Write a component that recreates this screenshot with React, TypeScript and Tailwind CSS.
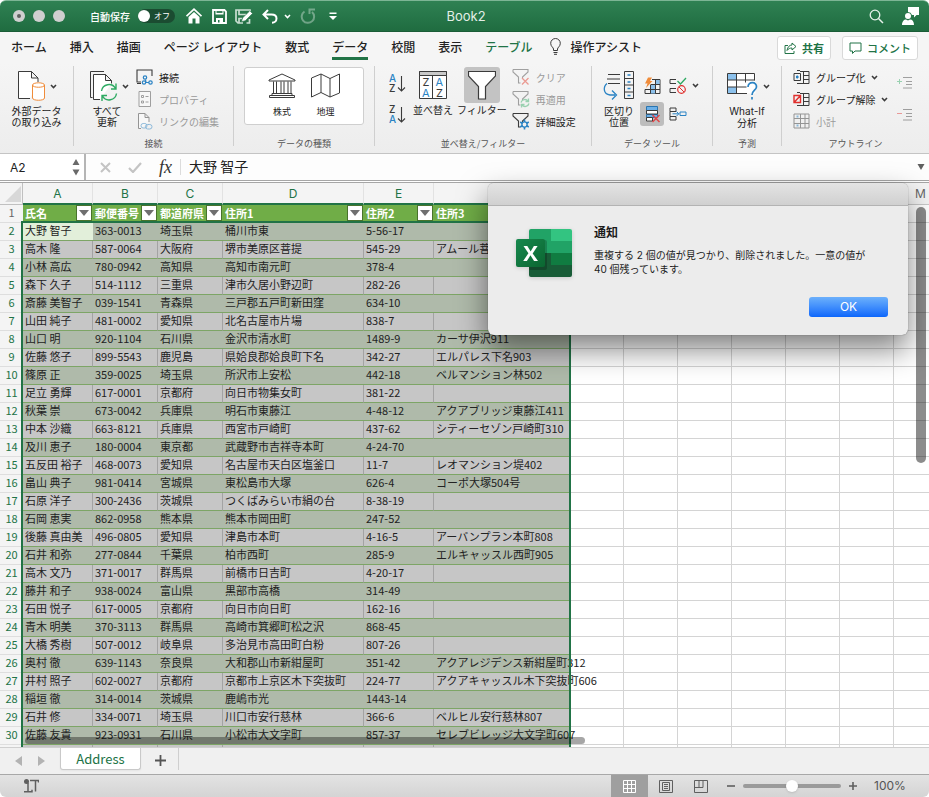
import type { ReactNode } from 'react';
import { clsx } from 'clsx';

const TABS = ['ホーム', '挿入', '描画', 'ページ レイアウト', '数式', 'データ', '校閲', '表示', 'テーブル'];

const HEADERS = ['氏名', '郵便番号', '都道府県', '住所1', '住所2', '住所3'];

const ROWS = [
  ['大野 智子', '363-0013', '埼玉県', '桶川市東', '5-56-17', ''],
  ['高木 隆', '587-0064', '大阪府', '堺市美原区菩提', '545-29', 'アムール菩提'],
  ['小林 高広', '780-0942', '高知県', '高知市南元町', '378-4', ''],
  ['森下 久子', '514-1112', '三重県', '津市久居小野辺町', '282-26', ''],
  ['斎藤 美智子', '039-1541', '青森県', '三戸郡五戸町新田窪', '634-10', ''],
  ['山田 純子', '481-0002', '愛知県', '北名古屋市片場', '838-7', ''],
  ['山口 明', '920-1104', '石川県', '金沢市清水町', '1489-9', 'カーサ伊沢911'],
  ['佐藤 悠子', '899-5543', '鹿児島', '県姶良郡姶良町下名', '342-27', 'エルパレス下名903'],
  ['篠原 正', '359-0025', '埼玉県', '所沢市上安松', '442-18', 'ベルマンション林502'],
  ['足立 勇輝', '617-0001', '京都府', '向日市物集女町', '381-22', ''],
  ['秋葉 崇', '673-0042', '兵庫県', '明石市東藤江', '4-48-12', 'アクアブリッジ東藤江411'],
  ['中本 沙織', '663-8121', '兵庫県', '西宮市戸崎町', '437-62', 'シティーセゾン戸崎町310'],
  ['及川 恵子', '180-0004', '東京都', '武蔵野市吉祥寺本町', '4-24-70', ''],
  ['五反田 裕子', '468-0073', '愛知県', '名古屋市天白区塩釜口', '11-7', 'レオマンション堤402'],
  ['畠山 典子', '981-0414', '宮城県', '東松島市大塚', '626-4', 'コーポ大塚504号'],
  ['石原 洋子', '300-2436', '茨城県', 'つくばみらい市絹の台', '8-38-19', ''],
  ['石岡 恵実', '862-0958', '熊本県', '熊本市岡田町', '247-52', ''],
  ['後藤 真由美', '496-0805', '愛知県', '津島市本町', '4-16-5', 'アーバンプラン本町808'],
  ['石井 和弥', '277-0844', '千葉県', '柏市西町', '285-9', 'エルキャッスル西町905'],
  ['高木 文乃', '371-0017', '群馬県', '前橋市日吉町', '4-20-17', ''],
  ['藤井 和子', '938-0024', '富山県', '黒部市高橋', '314-49', ''],
  ['石田 悦子', '617-0005', '京都府', '向日市向日町', '162-16', ''],
  ['青木 明美', '370-3113', '群馬県', '高崎市箕郷町松之沢', '868-45', ''],
  ['大橋 秀樹', '507-0012', '岐阜県', '多治見市高田町白粉', '807-26', ''],
  ['奥村 徹', '639-1143', '奈良県', '大和郡山市新紺屋町', '351-42', 'アクアレジデンス新紺屋町312'],
  ['井村 照子', '602-0027', '京都府', '京都市上京区木下突抜町', '224-77', 'アクアキャッスル木下突抜町606'],
  ['稲垣 徹', '314-0014', '茨城県', '鹿嶋市光', '1443-14', ''],
  ['石井 修', '334-0071', '埼玉県', '川口市安行慈林', '366-6', 'ベルヒル安行慈林807'],
  ['佐藤 友貴', '923-0931', '石川県', '小松市大文字町', '857-37', 'セレブビレッジ大文字町607'],
  ['', '', '', '', '', ''],
];

const EXTRA_COLUMNS = ['G', 'H', 'I', 'J', 'K', 'L', 'M'];

interface IconProps {
  w: number;
  h: number;
  className?: string;
  children: ReactNode;
}

const Icon = ({ w, h, className, children }: IconProps) => (
  <svg
    width={w}
    height={h}
    viewBox={`0 0 ${w} ${h}`}
    fill="none"
    stroke="#3b3b3b"
    className={clsx('shrink-0', className)}
    aria-hidden="true"
  >
    {children}
  </svg>
);

const Chevron = ({ className }: { className?: string }) => (
  <Icon w={7} h={5} className={className}>
    <path d="M1 1l2.5 2.6L6 1" strokeWidth="1.5" />
  </Icon>
);

const TitleBar = () => (
  <header className="flex h-8 items-center rounded-t-md border-t border-b border-t-[#7db595] border-b-[#1a5c37] bg-linear-to-b from-[#2f8153] to-[#1f6c40] text-white">
    <div className="flex flex-1 items-center pl-[13px]">
      <div className="flex gap-2">
        <button aria-label="閉じる" className="flex size-3 items-center justify-center rounded-full bg-[#cfcfcf]">
          <span className="size-1 rounded-full bg-[#5f5f5f]" />
        </button>
        <button aria-label="しまう" className="size-3 rounded-full bg-[#cfcfcf]" />
        <button aria-label="拡大" className="size-3 rounded-full bg-[#cfcfcf]" />
      </div>
      <span className="ml-[25px] text-[10px] font-medium">自動保存</span>
      <button
        role="switch"
        aria-checked="false"
        aria-label="自動保存"
        className="ml-2 flex h-[14px] w-[37px] items-center rounded-full bg-[#1b4c31]"
      >
        <span className="size-3 rounded-full bg-white" />
        <span className="ml-1 text-[8px] leading-none">オフ</span>
      </button>
      <div className="flex items-center pl-[11px]">
        <button aria-label="ホーム">
          <Icon w={16} h={16} className="stroke-none">
            <path d="M0.5 8.2L8 1.2l7.500 7" stroke="#fff" strokeWidth="1.7" />
            <path d="M2.500 9L8 4l5.500 5v6.500H9.500V10.500h-3v5h-4z" fill="#fff" />
          </Icon>
        </button>
        <button aria-label="保存" className="ml-[10px]">
          <Icon w={15} h={15}>
            <path d="M1 1h11.500L14 2.500V14H1z" stroke="#fff" strokeWidth="1.800" />
            <path d="M3.500 1.500h8v4h-8zM4 9h7v5H4z" fill="#fff" stroke="none" />
            <path d="M4.500 3h6" stroke="#26734a" strokeWidth="1.800" />
            <path d="M6 11h1.500v2.500H6z" fill="#26734a" stroke="none" />
          </Icon>
        </button>
        <button aria-label="名前を付けて保存" className="ml-2">
          <Icon w={18} h={15}>
            <path d="M8 14H3L1 12V1h14v2" stroke="#c9dfd2" strokeWidth="1.700" />
            <path d="M14.500 10v4h-3M4 1v4.500h7M4 14v-4.500h3" stroke="#c9dfd2" strokeWidth="1.700" />
            <path d="M7.500 9L14.800 1.800l2.700 2.700-7.200 7.200-3.800 1z" fill="#fff" stroke="#26734a" strokeWidth="0.600" />
          </Icon>
        </button>
        <button aria-label="元に戻す" className="ml-[9px]">
          <Icon w={16} h={15}>
            <path d="M6 1L1.500 5.500 6 10M2 5.500h7.500c3 0 5 1.600 5 4.100 0 2.400-2 4.200-4.500 4.200" stroke="#fff" strokeWidth="2" />
          </Icon>
        </button>
        <Chevron className="ml-[6px] stroke-white" />
        <button aria-label="やり直し" className="ml-[9px] opacity-35">
          <Icon w={16} h={16}>
            <path d="M4.500 3.500A6.200 6.200 0 1 0 12 4M9.500 6V1.500H15" stroke="#fff" strokeWidth="2" />
          </Icon>
        </button>
        <button aria-label="ツールバーのカスタマイズ" className="ml-[13px]">
          <Icon w={8} h={9} className="stroke-none">
            <path d="M0.500 0.500h7v1.500h-7zM0 4h8L4 8z" fill="#fff" />
          </Icon>
        </button>
      </div>
    </div>
    <h1 className="pt-[2px] font-[Inter] text-[13px] text-[#e3efe8]">Book2</h1>
    <div className="flex flex-1 items-center justify-end gap-[17px] pr-[10px]">
      <button aria-label="検索">
        <Icon w={15} h={15}>
          <circle cx="6" cy="6" r="4.800" stroke="#e6f1ea" strokeWidth="1.300" />
          <path d="M9.500 9.500L14 14" stroke="#e6f1ea" strokeWidth="1.500" />
        </Icon>
      </button>
      <button aria-label="アカウント">
        <Icon w={18} h={18} className="stroke-none">
          <path d="M7 0h11v8h-2.500L13 10.500V8H11A4.500 4.500 0 0 0 7 5z" fill="#fff" />
          <circle cx="7" cy="9" r="3" fill="#fff" />
          <path d="M1 18c0-3.500 2-5.500 4-5.500l2 1 2-1c2.500 0 4 2 4 5.500z" fill="#fff" />
        </Icon>
      </button>
    </div>
  </header>
);

const TabBar = () => (
  <nav className="flex h-[31px] items-start bg-[#f5f5f5] pr-[11px] pl-[11px] text-[12px] font-medium whitespace-nowrap text-[#222]">
    <div className="flex flex-1 gap-[23px]">
      {TABS.map((tab) => (
        <button
          key={tab}
          className={clsx(
            'h-7 border-b-[3px] pt-1 font-medium',
            tab === 'データ' ? 'border-[#217346] font-bold' : 'border-transparent',
            tab === 'テーブル' && 'text-[#217346]',
          )}
        >
          {tab}
        </button>
      ))}
      <button className="-ml-[5px] flex h-7 items-center gap-2 border-b-[3px] border-transparent pt-1 font-medium">
        <Icon w={12} h={17}>
          <path d="M3.500 12.500V11C3.500 9.500 0.700 8.500 0.700 5.300a4.800 4.800 0 0 1 9.600 0C10.300 8.500 7.500 9.500 7.500 11v1.500zM3.500 14.500h4M4 16.300h3" />
        </Icon>
        操作アシスト
      </button>
    </div>
    <div className="flex gap-[11px] pt-1 text-[11px] text-[#217346]">
      <button className="flex h-6 items-center gap-[5px] rounded-[3px] border border-[#d9d9d9] bg-white px-[6px] font-bold">
        <Icon w={13} h={12}>
          <path d="M4 3.500H1v8h9V9" stroke="#217346" />
          <path d="M8 1l4 3.500L8 8V6C6 6 4.500 6.500 3 8.500 3.500 5 5.500 3 8 3z" stroke="#217346" />
        </Icon>
        共有
      </button>
      <button className="flex h-6 items-center gap-[5px] rounded-[3px] border border-[#d9d9d9] bg-white px-[6px] font-medium">
        <Icon w={13} h={12}>
          <path d="M1 1h11v8H6l-2.500 2.500V9H1z" stroke="#217346" />
        </Icon>
        コメント
      </button>
    </div>
  </nav>
);

interface GroupProps {
  label: string;
  className: string;
  children: ReactNode;
}

const Group = ({ label, className, children }: GroupProps) => (
  <section className={clsx('flex h-20 shrink-0 flex-col justify-between border-[#cfcfcf]', className)}>
    <div className="flex items-start">{children}</div>
    <h2 className="-mb-1 text-center text-[9px] leading-3 text-[#555]">{label}</h2>
  </section>
);

interface SmallButtonProps {
  label: string;
  icon: ReactNode;
  disabled?: boolean;
  menu?: boolean;
}

const SmallButton = ({ label, icon, disabled, menu }: SmallButtonProps) => (
  <button
    disabled={disabled}
    className={clsx('flex h-[22px] items-center gap-[6px] whitespace-nowrap', disabled ? 'text-[#9a9a9a]' : 'text-[#222]')}
  >
    {icon}
    <span>{label}</span>
    {menu && <Chevron />}
  </button>
);

const Funnel = ({ children, faded }: { children: ReactNode; faded?: boolean }) => (
  <Icon w={18} h={18} className={clsx(faded && 'opacity-45')}>
    <path d="M1 1.500h15v2.500L10.500 9v1M1 1.500V4l5.500 5v6h2" strokeWidth="1.100" />
    {children}
  </Icon>
);

const Ribbon = () => (
  <div className="flex h-[91px] overflow-hidden border-b border-[#c4c4c4] bg-linear-to-b from-[#f5f5f5] to-[#ededed] pt-[3px] text-[10px] leading-[11px] text-[#222]">
    <Group label="" className="w-[74px] border-r">
      <button className="flex w-full flex-col items-center pt-1">
        <span className="flex items-center gap-[5px]">
          <Icon w={28} h={32}>
            <path d="M13 28.500H1.500v-27h13l6.500 6.500v4M14.500 1.500v6.500H21" fill="#fff" />
            <ellipse cx="21.500" cy="15" rx="6" ry="2.200" stroke="#f08c3a" fill="#fff" />
            <path d="M15.500 15v13c0 3 12 3 12 0V15" fill="#fff" stroke="#f08c3a" />
            <path d="M15.500 15c0 3 12 3 12 0" stroke="#f08c3a" />
          </Icon>
          <Chevron />
        </span>
        <span className="pt-[3px]">
          外部データ
          <br />
          の取り込み
        </span>
      </button>
    </Group>

    <Group label="接続" className="w-[160px] border-r">
      <button className="flex w-[62px] flex-col items-center pt-1">
        <span className="flex items-center gap-1 pl-2">
          <Icon w={29} h={32}>
            <path d="M15 1.500H1.500v26h2" />
            <path d="M11 29.500H4.500v-25h12l6 6v3M16.500 4.500v6h6" fill="#fff" />
            <path d="M12.500 21a7.500 7.500 0 0 1 14-2.500M27.500 23.500a7.500 7.500 0 0 1-14 2.500M27 13.500v5.500h-5M13 31v-5.500h5" stroke="#2eaa62" strokeWidth="1.400" />
          </Icon>
          <Chevron />
        </span>
        <span className="pt-[3px] pl-1">
          すべて
          <br />
          更新
        </span>
      </button>
      <div className="flex flex-col">
        <SmallButton
          label="接続"
          icon={
            <Icon w={17} h={16}>
              <path d="M5 13H1V1h15v6M1 14.500h4" strokeWidth="1.100" />
              <g stroke="#2a83c4" strokeWidth="1.200">
                <circle cx="9" cy="8.500" r="1.700" />
                <circle cx="8" cy="13.500" r="1.700" />
                <circle cx="14.500" cy="13.500" r="1.700" />
                <path d="M9.500 10.500l.5 3h3" />
              </g>
            </Icon>
          }
        />
        <SmallButton
          disabled
          label="プロパティ"
          icon={
            <Icon w={17} h={16} className="opacity-45">
              <path d="M3 .5h11.500v15H3z" fill="#fff" />
              <path d="M5.500 4.500h2v2h-2zM5.500 10h2v2h-2zM9.500 5.500h3M9.500 11h3" />
            </Icon>
          }
        />
        <SmallButton
          disabled
          label="リンクの編集"
          icon={
            <Icon w={17} h={17} className="opacity-50">
              <path d="M5 15.500H2.500v-15H9l4 4V9M9 .5v4h4" fill="#fff" />
              <rect x="5" y="10.500" width="6" height="4.500" rx="2.200" stroke="#2a83c4" />
              <rect x="9.500" y="11.500" width="6.500" height="4.500" rx="2.200" stroke="#2a83c4" />
            </Icon>
          }
        />
      </div>
    </Group>

    <Group label="データの種類" className="w-[141px] border-r">
      <div className="mx-[10px] mt-px flex h-[58px] flex-1 justify-center gap-[15px] rounded-[3px] border border-[#cfcfcf] bg-white pt-[5px] text-[9px]">
        <button className="flex flex-col items-center gap-2">
          <Icon w={28} h={25}>
            <path d="M1 8V7l13-6 13 6v1zM1.500 24.500v-2h25v2zM4 22v-1.500h20V22M5.500 8.500v12M8.500 8.500v12M13 8.500v12M16 8.500v12M20 8.500v12M23 8.500v12" />
          </Icon>
          株式
        </button>
        <button className="flex flex-col items-center gap-2">
          <Icon w={29} h={25}>
            <path d="M.5 5L10 1l9 4.500L28.500 1v19L19 24l-9-4.500L.5 24zM10 1v18.500M19 5.500V24" />
          </Icon>
          地理
        </button>
      </div>
    </Group>

    <Group label="並べ替え/フィルター" className="w-[217px] border-r">
      <div className="flex flex-col gap-[9px] pt-[7px] pl-[13px]">
        <button aria-label="昇順">
          <SortIcon first="A" second="Z" />
        </button>
        <button aria-label="降順">
          <SortIcon first="Z" second="A" />
        </button>
      </div>
      <button className="ml-[7px] flex flex-col items-center pt-[5px] whitespace-nowrap">
        <Icon w={28} h={28}>
          <path d="M.5 .5h27v27H.5z" fill="#fff" />
          <path d="M.5 .5h27v4H.5z" fill="#c9c9c9" />
          <path d="M13.500 4.500v23" />
          <g stroke="none" fontSize="11" className="font-[Inter]">
            <text x="3.500" y="15" fill="#3b3b3b">Z</text>
            <text x="3" y="25.500" fill="#2a83c4">A</text>
            <text x="16.500" y="15" fill="#2a83c4">A</text>
            <text x="17" y="25.500" fill="#3b3b3b">Z</text>
          </g>
        </Icon>
        <span className="pt-[5px]">並べ替え</span>
      </button>
      <button className="ml-1 flex flex-col items-center pt-px whitespace-nowrap">
        <span className="flex size-9 items-center justify-center rounded-[3px] bg-[#c3c3c3]">
          <Icon w={28} h={29}>
            <path d="M.5 .5h27V5L17.500 15.500V28h-7V15.500L.5 5z" fill="#fff" strokeWidth="1.200" />
          </Icon>
        </span>
        <span className="pt-[1px]">フィルター</span>
      </button>
      <div className="ml-[5px] flex flex-col">
        <SmallButton
          disabled
          label="クリア"
          icon={
            <Funnel faded>
              <path d="M10 10l6.500 6.500M16.500 10L10 16.500" stroke="#e0301e" strokeWidth="1.300" />
            </Funnel>
          }
        />
        <SmallButton
          disabled
          label="再適用"
          icon={
            <Funnel faded>
              <path d="M9 12.500a4 4 0 0 1 7-1.500M17 13.500a4 4 0 0 1-7 1.500M16.500 8.500V11.500h-3M9.500 17.500v-3h3" stroke="#2eaa62" strokeWidth="1.300" />
            </Funnel>
          }
        />
        <SmallButton
          label="詳細設定"
          icon={
            <Funnel>
              <circle cx="12.500" cy="12.500" r="2.600" stroke="#2a83c4" strokeWidth="1.400" />
              <path d="M12.500 7.500v2.500M12.500 15v2.500M8.200 10l2 1.200M14.800 13.800l2 1.200M8.200 15l2-1.200M14.800 11.200l2-1.200" stroke="#2a83c4" strokeWidth="1.600" />
            </Funnel>
          }
        />
      </div>
    </Group>

    <Group label="データ ツール" className="w-[121px] border-r">
      <button className="ml-[10px] flex w-[34px] flex-col items-center pt-1">
        <Icon w={32} h={32}>
          <path d="M5 4.500h12M4 9h13M5 13.500h12M21.500 1.500h9v27h-9zM21.500 8.500h9M21.500 15h9M21.500 22h9" />
          <path d="M24.500 5h3M24.500 12h3M24.500 18.500h3M24.500 25.500h3" stroke="#2a83c4" strokeWidth="1.300" />
          <path d="M4 13.500c-4 3.500-4 10.500 3 11.500h5M9 20.500l4.500 4.500L9 29.500" stroke="#2a83c4" strokeWidth="1.300" />
        </Icon>
        <span className="pt-[3px]">
          区切り
          <br />
          位置
        </span>
      </button>
      <div className="ml-1 grid grid-cols-[24px_18px_10px] items-center gap-x-[5px] gap-y-[5px] pt-[7px]">
        <button aria-label="フラッシュ フィル" className="flex h-6 items-center justify-center">
          <Icon w={17} h={17}>
            <path d="M8 2.500h8v14H1v-4" />
            <path d="M6.500 8h5v8.500h-5z" fill="#8cc1ec" stroke="none" />
            <path d="M11.500 3h4v4.500h-4z" fill="#8cc1ec" stroke="none" />
            <path d="M6.500 8v8.500M11.500 2.500v14M6.500 7.500H16M1 12.500h15" />
            <path d="M4 .5h4L6 4h2.500L2 11l1.500-4.500H1z" fill="#f08c3a" stroke="none" />
          </Icon>
        </button>
        <button aria-label="データの入力規則">
          <Icon w={18} h={17}>
            <path d="M7 2.500H1v4h6M7 11.500H1v4h6" />
            <path d="M8.500 4l3 3L17 1" stroke="#2eaa62" strokeWidth="1.300" />
            <circle cx="12.500" cy="12.500" r="3.800" stroke="#e0302e" strokeWidth="1.200" />
            <path d="M10 10l5 5" stroke="#e0302e" />
          </Icon>
        </button>
        <Chevron />
        <button aria-label="重複の削除" className="flex size-6 items-center justify-center rounded-[3px] bg-[#bdbdbd]">
          <Icon w={17} h={18}>
            <path d="M2.500 1.500h11v4h-11zM2.500 9.500h11v3h-11z" fill="#6cb0e8" stroke="#2a75b0" />
            <path d="M2.500 5.500h11v3.500h-11zM2.500 12.500h6v3.500h-6z" fill="#fff" />
            <path d="M8.500 10l7 7M15.500 10l-7 7" stroke="#e0484a" strokeWidth="1.500" />
          </Icon>
        </button>
        <button aria-label="統合">
          <Icon w={18} h={14}>
            <path d="M7 4.500V1H1v3.500h6M7 9.500V13H1V9.500h6M1 4.500v5" />
            <path d="M3.500 6.800h6M7.500 4.500l2.300 2.300-2.300 2.300M11 5h6v3.500h-6z" stroke="#2a83c4" />
          </Icon>
        </button>
      </div>
    </Group>

    <Group label="予測" className="w-[69px] border-r">
      <button className="flex w-full flex-col items-center pt-1">
        <span className="flex items-center gap-[5px]">
          <Icon w={33} h={32}>
            <path d="M2.500 3.500h28v20h-28z" fill="#fff" stroke="none" />
            <path d="M2.500 3.500h9v6.500h-9zM2.500 17h9v6.500h-9z" fill="#8cc1ec" stroke="none" />
            <path d="M22 23.500H2.500v-20h27v7M2.500 10h27M2.500 17h19M11.500 3.500v20M20.500 3.500v9" />
            <path d="M23 17c0-6 9-5.500 8.500 0-.3 3.200-4.500 3.500-4.500 8M27 27v2.500" stroke="#2a83c4" strokeWidth="1.700" />
          </Icon>
          <Chevron />
        </span>
        <span className="pt-[3px] text-center">
          <span className="font-[Inter]">What-If</span>
          <br />
          分析
        </span>
      </button>
    </Group>

    <Group label="アウトライン" className="flex-1">
      <div className="ml-[11px] flex flex-1 flex-col">
        <SmallButton
          menu
          label="グループ化"
          icon={
            <Icon w={17} h={14}>
              <path d="M7 1.500h9v12H7M10.500 1.500v12M10.500 5.500H16M10.500 9.500H16" />
              <path d="M1 3.500h6.500v7H1zM4 .5h3M4 13.500h3" />
              <path d="M3.500 6h1.500v2H3.500z" fill="#2a83c4" stroke="#2a83c4" />
            </Icon>
          }
        />
        <SmallButton
          menu
          label="グループ解除"
          icon={
            <Icon w={17} h={14}>
              <path d="M7 1.500h9v12H7M10.500 1.500v12M10.500 5.500H16M10.500 9.500H16M4 .5h3M4 13.500h3" />
              <path d="M1 3.500h6.500v7H1zM1 10.500l6.500-7" stroke="#e0302e" strokeWidth="1.400" />
            </Icon>
          }
        />
        <SmallButton
          disabled
          label="小計"
          icon={
            <Icon w={17} h={16} className="opacity-50">
              <path d="M1 1h15v14H1zM7.500 1v14M12 1v14M1 5.500h15M1 10.500h15" />
              <path d="M3.500 3.500h2M3.500 12.500h2" stroke="#2a83c4" strokeWidth="2" />
            </Icon>
          }
        />
      </div>
      <div className="flex flex-col gap-[18px] pt-[10px] pr-[17px]">
        <button disabled aria-label="詳細データの表示">
          <Icon w={15} h={14} className="opacity-45">
            <path d="M6 1.500h9M9 5.500h6M9 8.500h6M6 12h9" />
            <path d="M0 5.500h5M2.500 3v5" stroke="#2eaa62" />
          </Icon>
        </button>
        <button disabled aria-label="詳細を表示しない">
          <Icon w={15} h={14} className="opacity-45">
            <path d="M6 1.500h9M9 5.500h6M9 8.500h6M6 12h9" />
            <path d="M0 5.500h5" stroke="#e0302e" />
          </Icon>
        </button>
      </div>
    </Group>
  </div>
);

function SortIcon({ first, second }: { first: string; second: string }) {
  return (
    <Icon w={18} h={22}>
      <g stroke="none" fontSize="10" className="font-[Inter]">
        <text x="1" y="9" fill={first === 'A' ? '#2a83c4' : '#3b3b3b'} fontWeight="500">{first}</text>
        <text x="1" y="19" fill={second === 'A' ? '#2a83c4' : '#3b3b3b'} fontWeight="500">{second}</text>
      </g>
      <path d="M13.500 3v15M10 14.500l3.500 3.500 3.500-3.500" strokeWidth="1.100" />
    </Icon>
  );
}

const FormulaBar = () => (
  <div className="flex h-[27px] items-center border-b border-[#a6a6a6] bg-[#fdfdfd]">
    <div className="flex h-full w-[86px] items-center border-r-2 border-[#b5b5b5] bg-white pr-1 pl-[10px]">
      <input aria-label="名前ボックス" defaultValue="A2" className="w-0 flex-1 pt-px font-[Inter] text-[12px] text-[#222] outline-none" />
      <Icon w={8} h={18} className="stroke-none">
        <path d="M4 1l3.500 6h-7zM4 17.500L.5 11.500h7z" fill="#6a6a6a" />
      </Icon>
    </div>
    <div className="flex items-center pl-[14px]">
      <button aria-label="キャンセル">
        <Icon w={11} h={11}>
          <path d="M1 1l9 9M10 1l-9 9" stroke="#c4c4c4" strokeWidth="2" />
        </Icon>
      </button>
      <button aria-label="入力" className="ml-[17px]">
        <Icon w={14} h={11}>
          <path d="M1 6l4 4 8-9" stroke="#c4c4c4" strokeWidth="2.200" />
        </Icon>
      </button>
      <button aria-label="関数の挿入" className="ml-[17px] font-['Liberation_Serif'] text-[18px] leading-none text-[#333] italic">
        fx
      </button>
    </div>
    <input
      aria-label="数式バー"
      defaultValue="大野 智子"
      className="ml-2 h-4 flex-1 border-l border-[#dcdcdc] pb-[2px] pl-2 text-[14px] leading-[14px] text-[#222] outline-none"
    />
    <button aria-label="数式バーの展開" className="pr-1">
      <Icon w={8} h={6} className="stroke-none">
        <path d="M.5 0h7L4 6z" fill="#5f5f5f" />
      </Icon>
    </button>
  </div>
);

const Sheet = () => (
  <main className="relative min-h-0 flex-1 overflow-hidden border-t border-[#a6a6a6] bg-white">
    <table className="w-[948px] table-fixed border-separate border-spacing-0 text-[11px] leading-[14px] whitespace-nowrap text-[#222]">
      <colgroup>
        <col className="w-[23px]" />
        <col className="w-[70px]" />
        <col className="w-[65px]" />
        <col className="w-[65px]" />
        <col className="w-[141px]" />
        <col className="w-[70px]" />
        <col className="w-[136px]" />
        {EXTRA_COLUMNS.map((name) => (
          <col key={name} className="w-[54px]" />
        ))}
      </colgroup>
      <thead>
        <tr className="h-[22px] bg-[#f4f4f4] font-[Inter] text-[12px]">
          <th className="border-r border-b border-[#c0c0c0] p-0">
            <Icon w={16} h={16} className="ml-[5px] stroke-none">
              <path d="M16 0v16H0z" fill="#d8d8d8" />
            </Icon>
          </th>
          {['A', 'B', 'C', 'D', 'E', 'F'].map((name) => (
            <th key={name} className="border-r border-b-2 border-r-[#e2e2e2] border-b-[#217346] p-0 pt-px font-normal text-[#217346]">
              {name}
            </th>
          ))}
          {EXTRA_COLUMNS.map((name) => (
            <th key={name} className="border-r border-b border-[#c9c9c9] p-0 font-normal text-[#666]">
              {name}
            </th>
          ))}
        </tr>
        <tr className="h-[18px]">
          <th className="border-b border-[#dedede] bg-[#f4f4f4] p-0 align-top leading-[15px] font-normal text-[#666]">1</th>
          {HEADERS.map((name) => (
            <th key={name} className="border-b-2 border-[#217346] bg-[#70ad47] p-0 text-white">
              <div className="flex h-4 items-center justify-between pr-px pl-[2px]">
                {name}
                <button
                  aria-label={`${name}のフィルター`}
                  className="flex size-4 shrink-0 items-center justify-center border border-[#48732c] bg-white"
                >
                  <Icon w={10} h={6} className="stroke-none">
                    <path d="M0 0h10L5 6z" fill="#6f6f6f" />
                  </Icon>
                </button>
              </div>
            </th>
          ))}
          {EXTRA_COLUMNS.map((name) => (
            <td key={name} className="border-r border-b border-[#d4d4d4] p-0" />
          ))}
        </tr>
      </thead>
      <tbody>
        {ROWS.map((row, r) => (
          <tr key={r} className="h-[18px]">
            <th className="border-b border-[#dedede] bg-[#f4f4f4] p-0 align-top leading-[15px] font-normal text-[#217346]">
              {row[0] && r + 2}
            </th>
            {row.map((value, c) => (
              <td
                key={c}
                className={clsx(
                  'border-b border-b-[#7da566] py-0 pr-0 pl-[2px] align-top',
                  r % 2 === 0 ? 'bg-[#afbaaa]' : 'border-r border-r-[#a3a3a3] bg-[#c6c6c6]',
                  r === 0 && c === 0 && 'bg-[#e2efda]!',
                )}
              >
                <div className="h-4 w-0 leading-[15px]">{value}</div>
              </td>
            ))}
            {EXTRA_COLUMNS.map((name) => (
              <td key={name} className="border-r border-b border-[#d4d4d4] p-0" />
            ))}
          </tr>
        ))}
      </tbody>
    </table>
    {/* selection outline, runs past the bottom of the visible rows */}
    <div className="pointer-events-none absolute top-[38px] -bottom-2 left-[21px] w-[550px] border-2 border-[#217346]" />
    <div className="absolute top-6 right-[3px] h-64 w-[10px] rounded-full bg-black/45" />
    <div className="absolute bottom-[3px] left-[25px] h-[7px] w-[560px] rounded-full bg-black/35" />
  </main>
);

const SheetTabs = () => (
  <div className="flex h-[27px] items-start border-t border-[#cfcfcf] bg-[#f0f0f0]">
    <div className="flex gap-4 pt-2 pl-[15px]">
      <button aria-label="前のシート">
        <Icon w={7} h={10} className="stroke-none">
          <path d="M7 0v10L0 5z" fill="#b3b3b3" />
        </Icon>
      </button>
      <button aria-label="次のシート">
        <Icon w={7} h={10} className="stroke-none">
          <path d="M0 0v10l7-5z" fill="#b3b3b3" />
        </Icon>
      </button>
    </div>
    <button className="ml-[15px] h-[22px] w-[81px] rounded-b-[3px] border border-t-0 border-[#c9c9c9] bg-white text-[13px] leading-5 text-[#217346] shadow-xs">
      Address
    </button>
    <button aria-label="シートの追加" className="ml-[14px] pt-[7px]">
      <Icon w={11} h={11}>
        <path d="M5.500 0v11M0 5.500h11" stroke="#555" strokeWidth="1.800" />
      </Icon>
    </button>
    <div className="ml-[12px] h-[22px] w-px bg-[#cfcfcf]" />
  </div>
);

const StatusBar = () => (
  <footer className="flex h-[23px] items-center rounded-b-md border-t border-[#a8a8a8] bg-linear-to-b from-[#e3e3e3] to-[#d4d4d4]">
    <button aria-label="マクロの記録" className="ml-6 flex-1">
      <Icon w={15} h={14} className="stroke-none">
        <circle cx="2.500" cy="2.500" r="2.500" fill="#5f5f5f" />
        <path d="M6 1.500h8.500v2M11.500 1.500v11M0 12.800h8v-2M4 4v9" stroke="#5f5f5f" strokeWidth="1.500" />
      </Icon>
    </button>
    <button aria-label="標準" className="flex h-full w-[37px] items-center justify-center bg-[#9f9f9f]">
      <Icon w={13} h={13}>
        <path d="M.5 .5h12v12H.5zM4.500 .5v12M8.500 .5v12M.5 4.500h12M.5 8.500h12" stroke="#fff" />
      </Icon>
    </button>
    <button aria-label="ページ レイアウト" className="ml-[11px]">
      <Icon w={14} h={13}>
        <path d="M.5 .5h13v12H.5zM3.500 2.500h7v8h-7zM5 4.500h4M5 6.500h4M5 8.500h4" stroke="#5f5f5f" />
      </Icon>
    </button>
    <button aria-label="改ページ プレビュー" className="ml-[21px]">
      <Icon w={14} h={13}>
        <path d="M.5 .5h13v12H.5zM5 .5v7M9 .5v7M.5 7.500H9" stroke="#5f5f5f" />
      </Icon>
    </button>
    <button aria-label="縮小" className="ml-[19px]">
      <Icon w={8} h={8}>
        <path d="M0 4h8" stroke="#5f5f5f" strokeWidth="1.600" />
      </Icon>
    </button>
    <input
      type="range"
      aria-label="ズーム"
      min={0}
      max={100}
      defaultValue={50}
      className="mx-2 h-1 w-[98px] appearance-none rounded-full bg-[#9a9a9a] [&::-webkit-slider-thumb]:size-3 [&::-webkit-slider-thumb]:appearance-none [&::-webkit-slider-thumb]:rounded-full [&::-webkit-slider-thumb]:bg-white [&::-webkit-slider-thumb]:shadow"
    />
    <button aria-label="拡大">
      <Icon w={8} h={8}>
        <path d="M0 4h8M4 0v8" stroke="#5f5f5f" strokeWidth="1.600" />
      </Icon>
    </button>
    <span className="w-[72px] pl-[17px] font-[Inter] text-[12px] text-[#555]">100%</span>
  </footer>
);

const ExcelLogo = () => (
  <svg width="56" height="51" viewBox="0 0 56 51" className="shrink-0 drop-shadow-sm" aria-hidden="true">
    <defs>
      <clipPath id="sheet">
        <rect x="13" y="1" width="43" height="48" rx="2" />
      </clipPath>
      <linearGradient id="tile" x1="0" y1="0" x2="1" y2="1">
        <stop offset="0" stopColor="#17884e" />
        <stop offset="1" stopColor="#0b6631" />
      </linearGradient>
    </defs>
    <g clipPath="url(#sheet)">
      <path fill="#21a366" d="M13 1h22v12H13z" />
      <path fill="#33c481" d="M35 1h21v12H35z" />
      <path fill="#21a366" d="M13 13h43v12H13z" />
      <path fill="#107c41" d="M13 25h43v12H13z" />
      <path fill="#185c37" d="M13 37h43v12H13z" />
      <path fill="#185c37" d="M13 25h22v12H13z" />
      <rect x="6" y="12" width="25" height="30" rx="2" opacity=".2" />
    </g>
    <rect x="0" y="11" width="29" height="28" rx="2" fill="url(#tile)" />
    <text x="14.500" y="33" textAnchor="middle" fontSize="22" fontWeight="700" fill="#fff" className="font-['Open_Sans']">
      X
    </text>
  </svg>
);

const NoticeDialog = () => (
  <div
    role="alertdialog"
    aria-labelledby="notice-title"
    className="absolute top-[183px] right-[21px] w-[420px] overflow-hidden rounded-md bg-[#ececec] text-[#1c1c1c] shadow-[0_0_1px_rgba(0,0,0,0.6),0_14px_30px_rgba(0,0,0,0.5)]"
  >
    <div className="h-[23px] border-b border-[#b3b3b3] bg-linear-to-b from-[#e4e4e4] to-[#d0d0d0]" />
    <div className="flex gap-[22px] pt-[22px] pl-7">
      <ExcelLogo />
      <div className="pr-5">
        <h2 id="notice-title" className="-mt-[4px] text-[12px] leading-4 font-bold">
          通知
        </h2>
        <p className="mt-2 font-[Inter,'Noto_Sans_CJK_JP',sans-serif] text-[10px] leading-[14px]">
          重複する 2 個の値が見つかり、削除されました。一意の値が
          <br />
          40 個残っています。
        </p>
      </div>
    </div>
    <div className="flex justify-end pt-[18px] pr-5 pb-[18px]">
      <button className="h-5 w-[79px] rounded-[3px] bg-linear-to-b from-[#6cb0fb] to-[#0a66fb] font-[Inter] text-[12px] leading-5 text-white">
        OK
      </button>
    </div>
  </div>
);

export default function App() {
  return (
    <div className="relative flex h-screen flex-col overflow-hidden bg-white font-['Noto_Sans_CJK_JP',sans-serif]">
      <TitleBar />
      <TabBar />
      <Ribbon />
      <FormulaBar />
      <div className="h-px bg-white" />
      <Sheet />
      <SheetTabs />
      <StatusBar />
      <NoticeDialog />
    </div>
  );
}
